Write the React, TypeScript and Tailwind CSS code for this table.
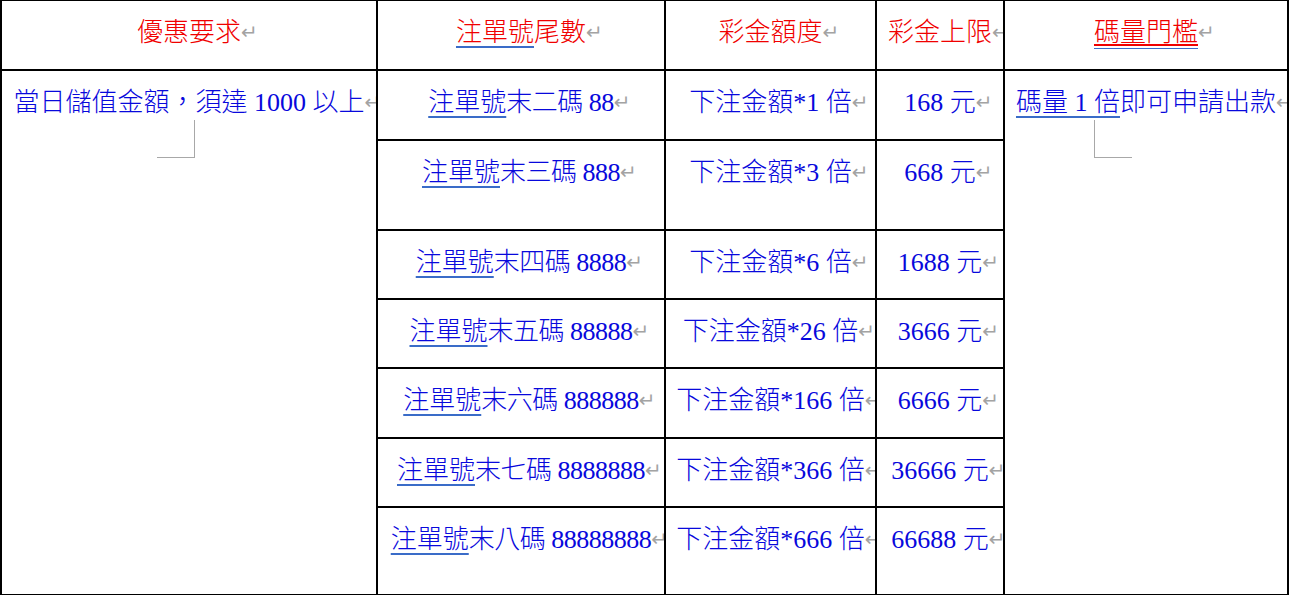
import React from "react";

const blue = "text-[#0808dc]";
const red = "text-[#f00000]";

function Mark() {
	return (
		<span className="inline-block w-0 align-top font-['DejaVu_Sans'] text-[20px] leading-[34px] font-normal text-[#a3a3a3]">
			↵
		</span>
	);
}

function Ul({ children }: { children: React.ReactNode }) {
	return (
		<span className="underline decoration-[#3a6cc8] decoration-[1.5px] underline-offset-[5px]">
			{children}
		</span>
	);
}

const cell =
	"border-r-2 border-b-2 border-black overflow-hidden text-center whitespace-nowrap pt-[14px] leading-[36px]";

const rows = [
	{ tail: "末二碼 88", bet: "下注金額*1 倍", cap: "168 元" },
	{ tail: "末三碼 888", bet: "下注金額*3 倍", cap: "668 元" },
	{ tail: "末四碼 8888", bet: "下注金額*6 倍", cap: "1688 元" },
	{ tail: "末五碼 88888", bet: "下注金額*26 倍", cap: "3666 元" },
	{ tail: "末六碼 888888", bet: "下注金額*166 倍", cap: "6666 元" },
	{ tail: "末七碼 8888888", bet: "下注金額*366 倍", cap: "36666 元" },
	{ tail: "末八碼 88888888", bet: "下注金額*666 倍", cap: "66688 元" },
];

export default function App() {
	return (
		<div className="w-[1291px] h-[595px] overflow-hidden bg-white font-['Liberation_Serif','Noto_Sans_CJK_TC',serif] text-[26px] font-light">
			<div className="-mt-[1px] w-[1289px] grid grid-cols-[376px_288px_211px_128px_284px] grid-rows-[70px_70px_90px_69px_69px_70px_69px_88px] border-l-2 border-t-2 border-black">
				<div className={`${cell} ${red}`}>
					優惠要求<Mark />
				</div>
				<div className={`${cell} ${red}`}>
					<Ul>注單號</Ul>尾數<Mark />
				</div>
				<div className={`${cell} ${red}`}>
					彩金額度<Mark />
				</div>
				<div className={`${cell} ${red}`}>
					彩金上限<Mark />
				</div>
				<div className={`${cell} ${red}`}>
					<span className="underline decoration-[#f00000] decoration-[1.5px] underline-offset-[3px] border-b border-[#3a6cc8] pb-[1px]">
						碼量門檻
					</span>
					<Mark />
				</div>

				<div className={`${cell} ${blue} row-span-7`}>
					<div>
						當日儲值金額，須達 1000 以上<Mark />
					</div>
					<div className="ml-[155px] -mt-[1px] w-[38px] h-[38px] border-r border-b border-[#a8a8a8]" />
				</div>
				{rows.map((r, i) => (
					<React.Fragment key={i}>
						<div className={`${cell} ${blue}`}>
							<Ul>注單號</Ul>
							<span className="tracking-[-0.5px]">{r.tail}</span>
							<Mark />
						</div>
						<div className={`${cell} ${blue}`}>
							{r.bet}
							<Mark />
						</div>
						<div className={`${cell} ${blue}`}>
							{r.cap}
							<Mark />
						</div>
						{i === 0 && (
							<div className={`${cell} ${blue} row-span-7`}>
								<div>
									<Ul>碼量 1 倍</Ul>即可申請出款<Mark />
								</div>
								<div className="ml-[89px] -mt-[1px] w-[38px] h-[38px] border-l border-b border-[#a8a8a8]" />
							</div>
						)}
					</React.Fragment>
				))}
			</div>
		</div>
	);
}
